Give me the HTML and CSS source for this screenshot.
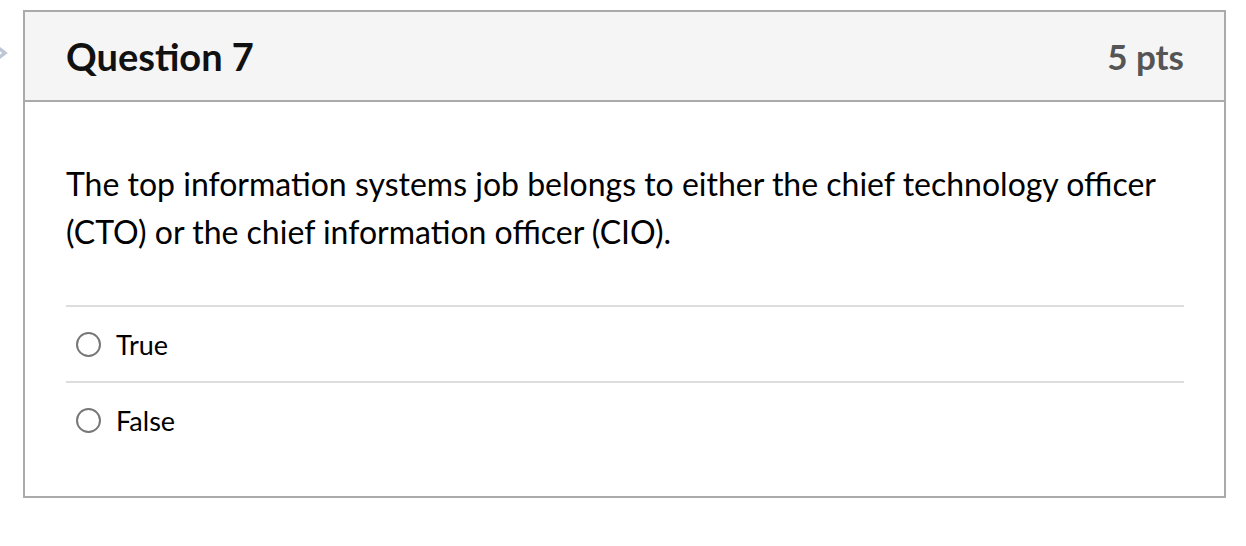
FILE: index.html
```html
<!DOCTYPE html>
<html>
<head>
<meta charset="utf-8">
<link rel="stylesheet" href="styles.css">
</head>
<body>
<div class="page">
  <svg class="flag" width="10" height="20" viewBox="0 0 10 20"><path d="M-4 3 L5 10 L-4 17" fill="none" stroke="#bcc7d6" stroke-width="3.5"/></svg>
  <div class="card">
    <div class="header">
      <h2 class="title">Question 7</h2>
      <div class="pts">5 pts</div>
    </div>
    <div class="body">
      <p class="text">The top information systems job belongs to either the chief technology officer (CTO) or the chief information officer (CIO).</p>
      <div class="answers">
        <label class="answer"><span class="radio"></span><span class="label">True</span></label>
        <label class="answer"><span class="radio"></span><span class="label">False</span></label>
      </div>
    </div>
  </div>
</div>
</body>
</html>
```
FILE: styles.css
```css
html, body { margin: 0; padding: 0; background: #fff; }
body { font-family: Lato, "Open Sans", sans-serif; color: #000; }
.page { position: relative; padding: 10px 0 0 23px; }
.flag { position: absolute; left: 0; top: 43px; }
.card { width: 1199px; border: 2px solid #aaa; }
.header {
  background: #f5f5f5;
  border-bottom: 2px solid #aaa;
  height: 88px;
  display: flex;
  align-items: center;
  justify-content: space-between;
  padding: 0 40px 0 41px;
}
.title { margin: 0; font-size: 38px; font-weight: 700; color: #111; }
.pts { font-size: 35px; font-weight: 700; color: #555; }
.body { padding: 58px 40px 39px 41px; }
.text { margin: 0 0 49px; font-size: 32px; line-height: 48px; }
.answers { border-top: 2px solid #ddd; }
.answer {
  display: flex; align-items: center;
  height: 74px;
  border-bottom: 2px solid #ddd;
}
.answer:last-child { border-bottom: none; }
.radio {
  width: 21px; height: 21px;
  border: 2px solid #777; border-radius: 50%;
  margin-left: 10px; margin-right: 15px;
}
.label { font-size: 27px; }
```
